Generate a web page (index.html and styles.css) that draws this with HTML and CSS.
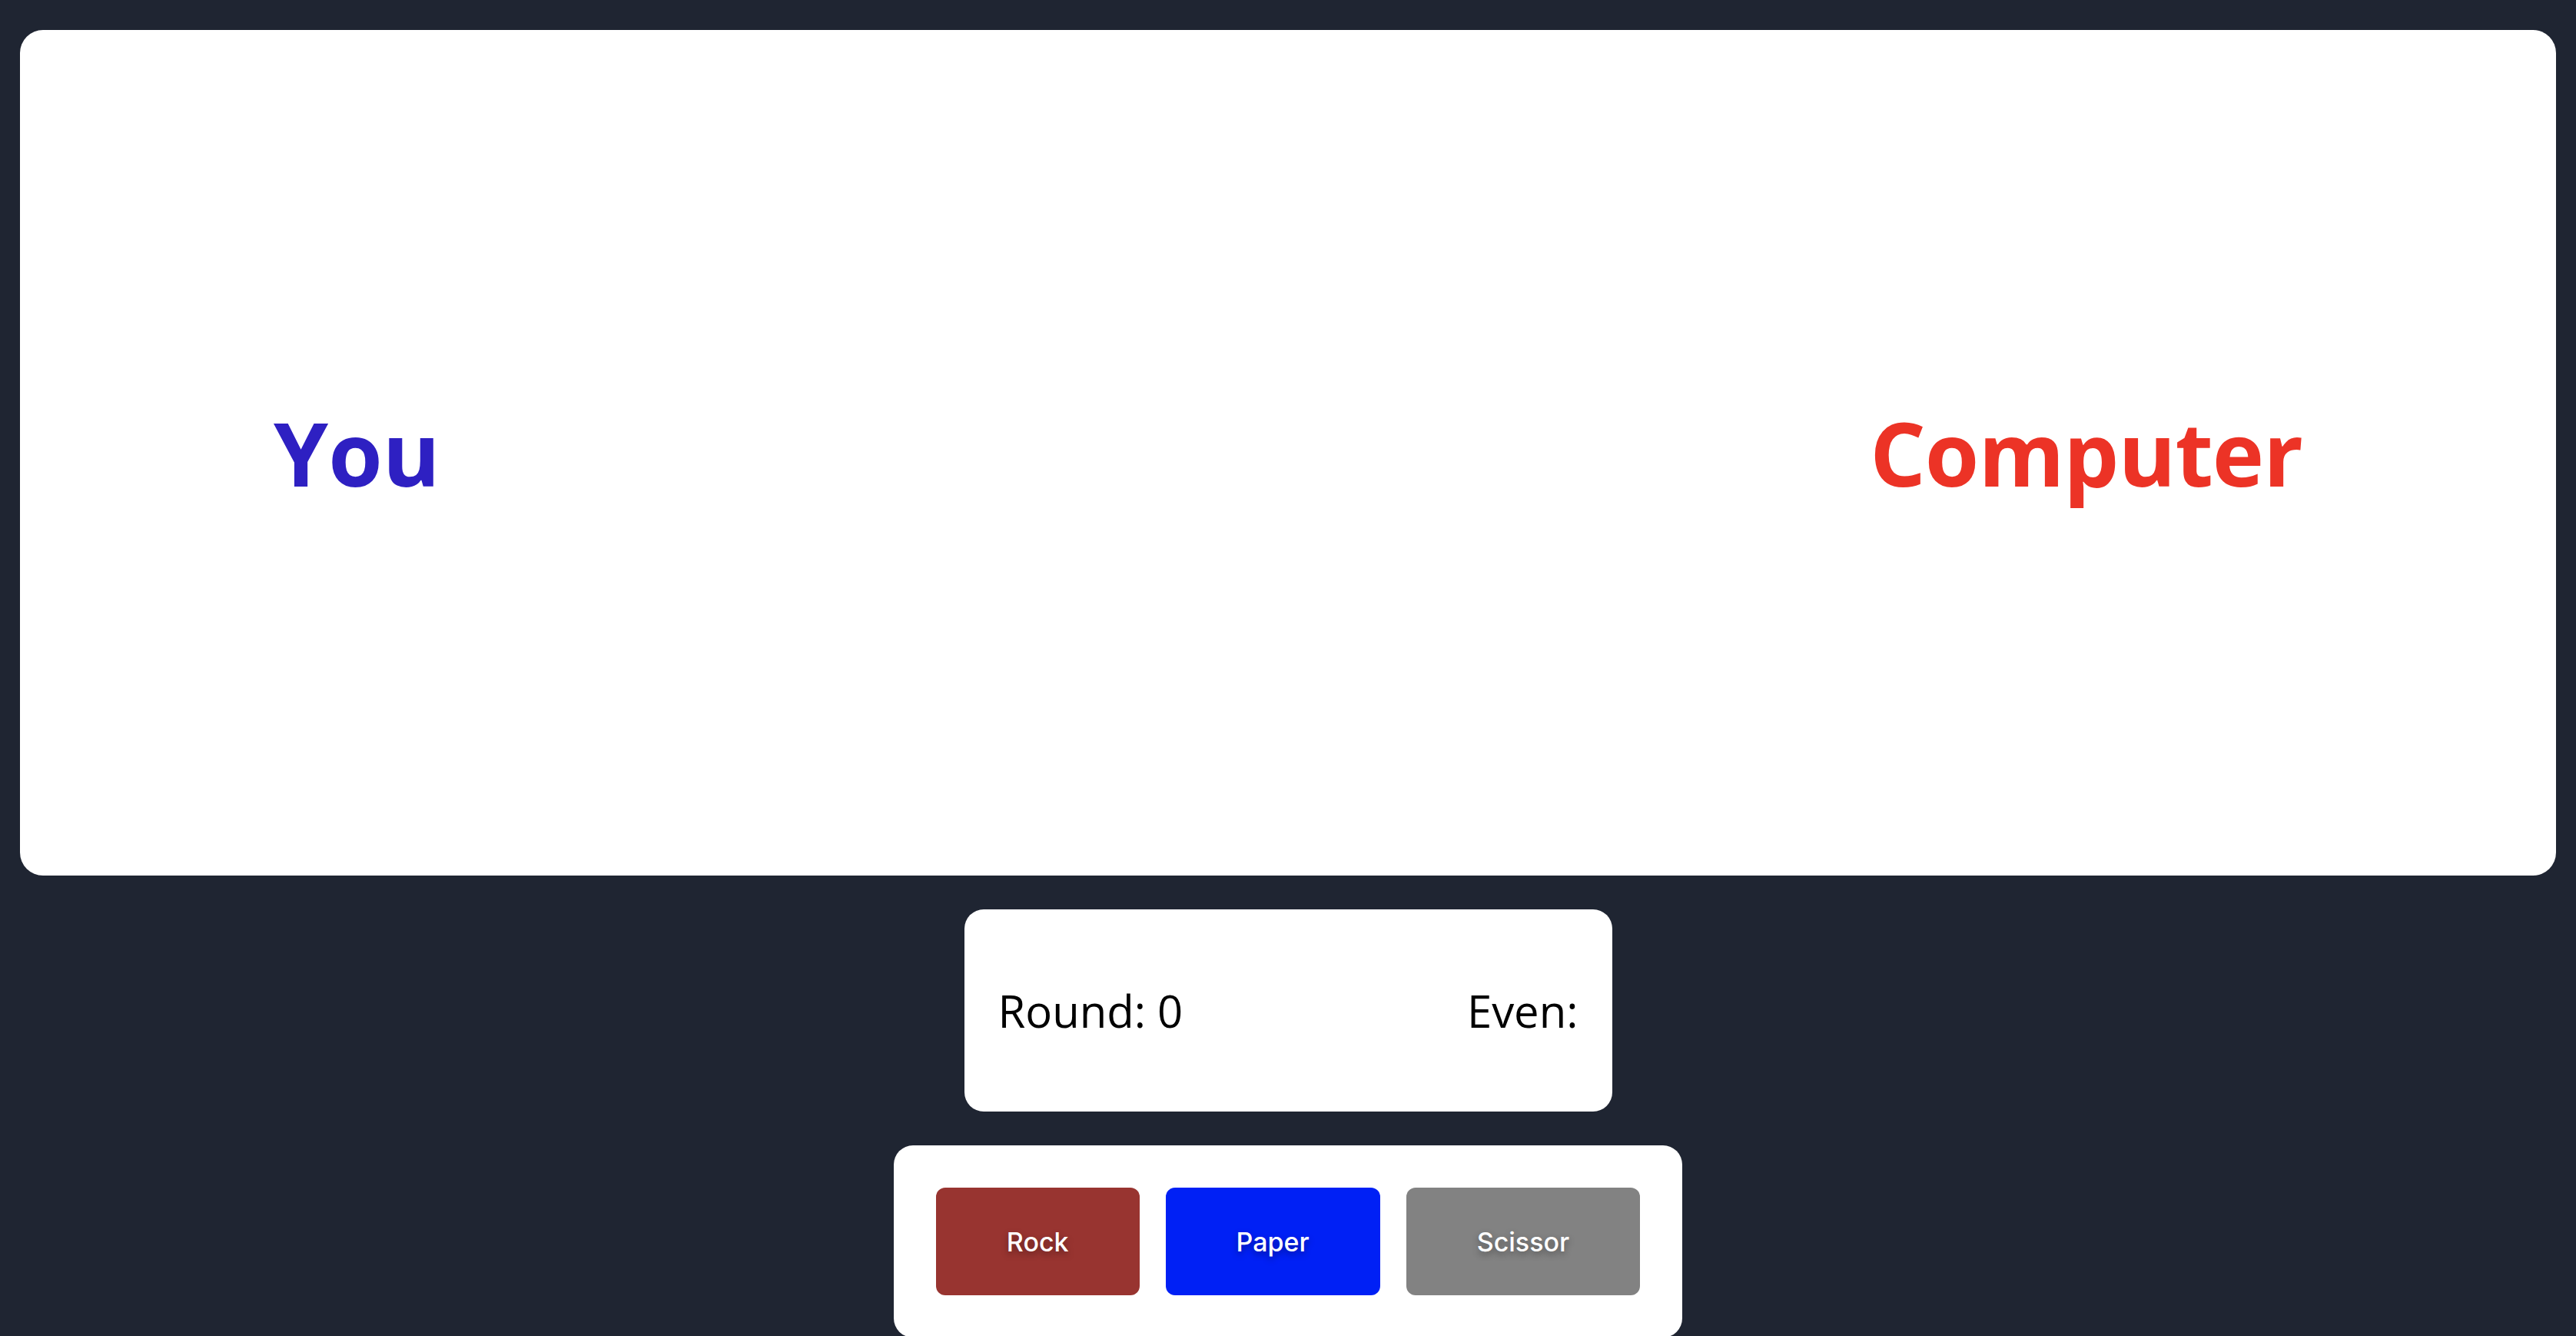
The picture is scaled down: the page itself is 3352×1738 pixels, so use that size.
FILE: index.html
```html
<!DOCTYPE html>
<html lang="en">
<head>
<meta charset="utf-8">
<title>Rock Paper Scissor</title>
<link rel="stylesheet" href="styles.css">
</head>
<body>
<main class="page">
  <section class="arena">
    <h1 class="player player-you">You</h1>
    <h1 class="player player-computer">Computer</h1>
  </section>
  <section class="score">
    <span class="score-item">Round: 0</span>
    <span class="score-item">Even:</span>
  </section>
  <section class="controls">
    <button class="btn btn-rock">Rock</button>
    <button class="btn btn-paper">Paper</button>
    <button class="btn btn-scissor">Scissor</button>
  </section>
</main>
</body>
</html>
```
FILE: styles.css
```css
html, body {
  margin: 0;
  padding: 0;
  background: #1f2532;
}
body {
  font-family: "Open Sans", "Noto Sans", sans-serif;
}
.page {
  padding: 39px 26px 0;
  display: flex;
  flex-direction: column;
  align-items: center;
  gap: 44px;
}
.arena {
  box-sizing: border-box;
  width: 100%;
  height: 1100px;
  background: #ffffff;
  border-radius: 30px;
  padding: 0 330px;
  display: flex;
  justify-content: space-between;
  align-items: center;
}
.player {
  margin: 0;
  font-family: "Open Sans", sans-serif;
  font-weight: 700;
  font-size: 114px;
  line-height: 1;
}
.player-you { color: #2e20c2; }
.player-computer { color: #ec3326; letter-spacing: -1px; }
.score {
  box-sizing: border-box;
  width: 843px;
  height: 263px;
  background: #ffffff;
  border-radius: 25px;
  padding: 0 44px;
  display: flex;
  justify-content: space-between;
  align-items: center;
}
.score-item {
  font-family: "Open Sans", sans-serif;
  font-size: 58px;
  color: #000;
  line-height: 1;
}
.controls {
  background: #ffffff;
  border-radius: 25px;
  padding: 55px;
  display: flex;
  gap: 34px;
}
.btn {
  height: 140px;
  padding: 0 92px;
  border: none;
  border-radius: 12px;
  font-family: Inter, "Liberation Sans", sans-serif;
  font-weight: 500;
  font-size: 34px;
  color: #ffffff;
  text-shadow: 0 4px 8px rgba(0, 0, 0, 0.35);
  cursor: pointer;
}
.btn-rock { background: #983430; }
.btn-paper { background: #0020f5; }
.btn-scissor { background: #828282; }
```
